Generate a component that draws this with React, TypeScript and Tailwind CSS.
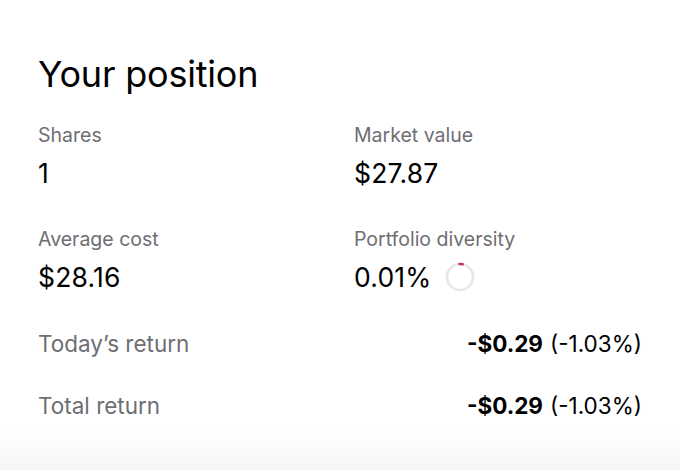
import React from 'react'

const stats = [
  { label: 'Shares', value: '1' },
  { label: 'Market value', value: '$27.87' },
  { label: 'Average cost', value: '$28.16' },
  { label: 'Portfolio diversity', value: '0.01%', ring: true },
]

const returns = [
  { label: 'Today’s return', amount: '-$0.29', pct: '(-1.03%)' },
  { label: 'Total return', amount: '-$0.29', pct: '(-1.03%)' },
]

function DiversityRing() {
  return (
    <svg width="30" height="30" viewBox="0 0 30 30" className="ml-[13px]">
      <circle cx="15" cy="15" r="13" fill="none" stroke="#e6e7ea" strokeWidth="2.6" />
      <path d="M14.6 2 A13 13 0 0 1 17.7 2.3" fill="none" stroke="#c8325a" strokeWidth="2.6" strokeLinecap="round" />
    </svg>
  )
}

export default function App() {
  return (
    <div className="relative h-[470px] w-[680px] overflow-hidden bg-white font-['Inter',sans-serif]">
      <div className="px-[38px] pt-[52px]">
        <h1 className="text-[36px] leading-[44px] font-normal tracking-[-0.2px] text-black">Your position</h1>

        <div className="mt-[27px] grid grid-cols-[316px_1fr] gap-y-[38px]">
          {stats.map((s) => (
            <div key={s.label}>
              <div className="text-[19.5px] leading-[24px] text-[#6e6e73]">{s.label}</div>
              <div className="mt-[10px] flex h-[32px] items-center text-[26.5px] leading-[32px] tracking-[0.2px] text-black">
                {s.value}
                {s.ring && <DiversityRing />}
              </div>
            </div>
          ))}
        </div>

        <div className="mt-[20px] flex flex-col">
          {returns.map((r) => (
            <div key={r.label} className="flex h-[62px] items-center justify-between">
              <span className="text-[22.5px] text-[#6e6e73]">{r.label}</span>
              <span className="flex items-center gap-[7px] text-[22.5px] text-black">
                <span className="font-bold">{r.amount}</span>
                <span>{r.pct}</span>
              </span>
            </div>
          ))}
        </div>
      </div>

      <div className="absolute inset-x-0 bottom-0 h-[40px] bg-gradient-to-b from-white to-[#f6f6f6]" />
    </div>
  )
}
